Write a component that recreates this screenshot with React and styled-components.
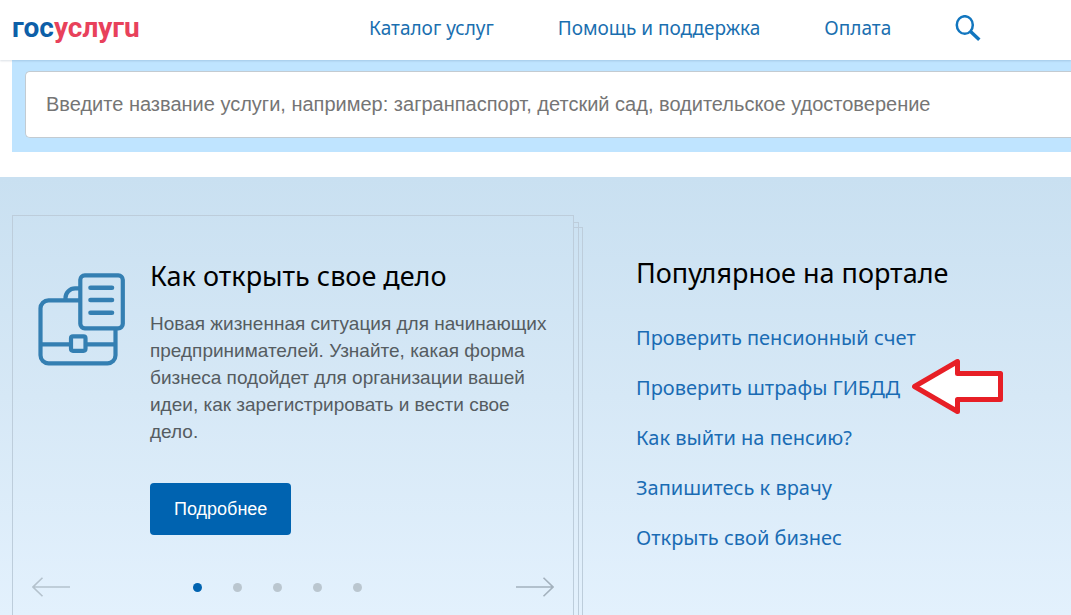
import React from "react";
import styled, { createGlobalStyle } from "styled-components";

const display = '"Noto Sans", "Open Sans", sans-serif';
const body = '"Liberation Sans", Arial, sans-serif';

const GlobalStyle = createGlobalStyle`
  *, *::before, *::after { box-sizing: border-box; }
  html, body, #root { height: 100%; }
  body { margin: 0; background: #fff; font-family: ${body}; color: #000; }
`;

const Page = styled.div`
  display: flex;
  flex-direction: column;
  min-height: 100%;
  overflow-x: hidden;
`;

const Header = styled.header`
  position: relative;
  z-index: 1;
  display: flex;
  align-items: center;
  height: 60px;
  padding: 0 12px 4px;
  background: #fff;
  box-shadow: 0 1px 2px rgba(0, 40, 80, 0.15);
`;

const LogoLink = styled.a`
  flex: 0 0 357px;
  font: 700 28px/36px Roboto, ${body};
  color: #0d5fa8;
  text-decoration: none;
`;

const LogoAccent = styled.span`
  color: #e8415b;
`;

const Nav = styled.nav`
  display: flex;
  align-items: center;
  gap: 64px;
`;

const NavLink = styled.a`
  font: 400 19px/28px ${display};
  color: #1a6fb0;
  text-decoration: none;
  white-space: nowrap;
`;

const IconButton = styled.button`
  display: flex;
  padding: 0;
  border: 0;
  background: none;
  color: ${(p) => p.$color};
  cursor: pointer;
`;

const SearchBand = styled.form`
  margin: 0 0 25px 12px;
  padding: 11px 0 14px 13px;
  background: #bfe4ff;
`;

const SearchInput = styled.input`
  display: block;
  width: 100%;
  height: 67px;
  padding: 0 20px;
  border: 1px solid #c3cbd1;
  border-right: 0;
  border-radius: 5px 0 0 5px;
  background: #fff;
  font: 400 20px/28px ${body};
  color: #333;
  outline: none;
  &::placeholder { color: #757575; opacity: 1; }
`;

const Hero = styled.main`
  flex: 1;
  display: grid;
  grid-template-columns: minmax(0, 562fr) minmax(0, 435fr);
  column-gap: 62px;
  padding: 38px 0 0 12px;
  background: linear-gradient(#c9e0f1, #d6e8f6 50%, #e3f1fd);
`;

const Card = styled.section`
  position: relative;
  display: flex;
  flex-direction: column;
  padding: 40px 19px 8px 25px;
  border: 1px solid #bdcddb;
  border-bottom: 0;
`;

const CardSheet = styled.div`
  position: absolute;
  top: ${(p) => p.$top}px;
  bottom: 0;
  left: 100%;
  width: ${(p) => p.$width}px;
  border: 1px solid #bdcddb;
  border-width: 1px 1px 0 0;
`;

const CardBody = styled.div`
  display: grid;
  grid-template-columns: 88px minmax(0, 1fr);
  column-gap: 24px;
`;

const Illustration = styled.svg`
  margin-top: 17px;
`;

const Title = styled.h2`
  margin: 0;
  font: 400 27px/40px ${display};
  white-space: nowrap;
`;

const Description = styled.p`
  margin: 14px 0 38px;
  font-size: 19px;
  line-height: 27px;
  color: #555c61;
`;

const PrimaryButton = styled.button`
  height: 52px;
  padding: 0 24px;
  border: 0;
  border-radius: 4px;
  background: #0063b0;
  font: 400 18px/24px ${body};
  color: #fff;
  cursor: pointer;
`;

const Pager = styled.div`
  display: flex;
  align-items: center;
  justify-content: space-between;
  margin: 42px 0 0 -6px;
`;

const Dots = styled.div`
  display: flex;
  gap: 31px;
  margin-right: 32px;
`;

const Dot = styled.button`
  width: 9px;
  height: 9px;
  padding: 0;
  border: 0;
  border-radius: 50%;
  background: ${(p) => (p.$active ? "#0063b0" : "#bac6cf")};
  cursor: pointer;
`;

const Popular = styled.section`
  padding-top: 38px;
`;

const LinkList = styled.ul`
  margin: 30px 0 0;
  padding: 0;
  list-style: none;
  display: grid;
  row-gap: 20px;
`;

const LinkItem = styled.li`
  display: flex;
  align-items: center;
  gap: 12px;
  height: 30px;
`;

const PopularLink = styled.a`
  font: 400 20px/30px ${display};
  color: #1a6cb4;
  text-decoration: none;
  white-space: nowrap;
`;

const Pointer = styled.svg`
  flex: none;
  margin: -14px 0;
`;

const SearchIcon = () => (
  <svg width="26" height="26" viewBox="0 0 26 26" fill="none" stroke="currentColor">
    <ellipse cx="9.8" cy="10" rx="8" ry="8.8" strokeWidth="2.5" />
    <path d="M15.3 16.2 24.3 24.8" strokeWidth="3.4" />
  </svg>
);

const BriefcaseIcon = () => (
  <Illustration width="88" height="94" viewBox="0 0 88 94" fill="none" stroke="#347fb2" strokeWidth="4.2" aria-hidden="true">
    <path d="M41 27.3H10.5a8 8 0 0 0-8 8v47a8 8 0 0 0 8 8h59a8 8 0 0 0 8-8V56" />
    <path d="M27.5 27v-2a9.6 9.6 0 0 1 9.600-9.600H41" />
    <rect x="42.3" y="2.3" width="42.500" height="53" rx="4.500" />
    <path d="M52.500 14.700h21.500M52.500 27h21.500M52.500 39.700h21.500" strokeLinecap="round" strokeWidth="4.600" />
    <path d="M3 71.300h29.500M49 71.300h28" />
    <rect x="33" y="63.300" width="14.500" height="14.500" rx="2" />
  </Illustration>
);

const LongArrow = ({ right }) => (
  <svg width="38" height="20" viewBox="0 0 38 20" fill="none" stroke="currentColor" strokeWidth="1.6">
    <path d={right ? "M0 10H37M27.500 .800 37 10 27.500 19.200" : "M38 10H1M10.500 .800 1 10 10.500 19.200"} />
  </svg>
);

const PointerArrow = () => (
  <Pointer width="92" height="58" viewBox="0 0 92 58" aria-hidden="true">
    <path d="M2.500 27.500 45.500 2.500V14.500H88.500V40.500H45.500V52.500Z" fill="#fff" stroke="#e71f26" strokeWidth="5" strokeLinejoin="round" />
  </Pointer>
);

const navItems = ["Каталог услуг", "Помощь и поддержка", "Оплата"];

const popular = [
  { text: "Проверить пенсионный счет" },
  { text: "Проверить штрафы ГИБДД", marked: true },
  { text: "Как выйти на пенсию?" },
  { text: "Запишитесь к врачу" },
  { text: "Открыть свой бизнес" },
];

export default function App() {
  return (
    <Page>
      <GlobalStyle />
      <Header>
        <LogoLink href="#" aria-label="госуслуги">
          гос<LogoAccent>услугu</LogoAccent>
        </LogoLink>
        <Nav>
          {navItems.map((t) => (
            <NavLink key={t} href="#">{t}</NavLink>
          ))}
          <IconButton type="button" aria-label="Поиск" $color="#1276bf">
            <SearchIcon />
          </IconButton>
        </Nav>
      </Header>
      <SearchBand role="search">
        <SearchInput
          type="text"
          aria-label="Название услуги"
          placeholder="Введите название услуги, например: загранпаспорт, детский сад, водительское удостоверение"
        />
      </SearchBand>
      <Hero>
        <Card>
          <CardSheet $top={6} $width={6} />
          <CardSheet $top={11} $width={10} />
          <CardBody>
            <BriefcaseIcon />
            <div>
              <Title>Как открыть свое дело</Title>
              <Description>
                Новая жизненная ситуация для начинающих предпринимателей. Узнайте, какая форма бизнеса подойдет для
                организации вашей идеи, как зарегистрировать и вести свое дело.
              </Description>
              <PrimaryButton type="button">Подробнее</PrimaryButton>
            </div>
          </CardBody>
          <Pager>
            <IconButton type="button" aria-label="Назад" $color="#b4c2cd">
              <LongArrow />
            </IconButton>
            <Dots>
              {[1, 2, 3, 4, 5].map((n) => (
                <Dot key={n} type="button" aria-label={`Слайд ${n}`} $active={n === 1} />
              ))}
            </Dots>
            <IconButton type="button" aria-label="Вперед" $color="#a3b1bd">
              <LongArrow right />
            </IconButton>
          </Pager>
        </Card>
        <Popular>
          <Title>Популярное на портале</Title>
          <LinkList>
            {popular.map((p) => (
              <LinkItem key={p.text}>
                <PopularLink href="#">{p.text}</PopularLink>
                {p.marked && <PointerArrow />}
              </LinkItem>
            ))}
          </LinkList>
        </Popular>
      </Hero>
    </Page>
  );
}
